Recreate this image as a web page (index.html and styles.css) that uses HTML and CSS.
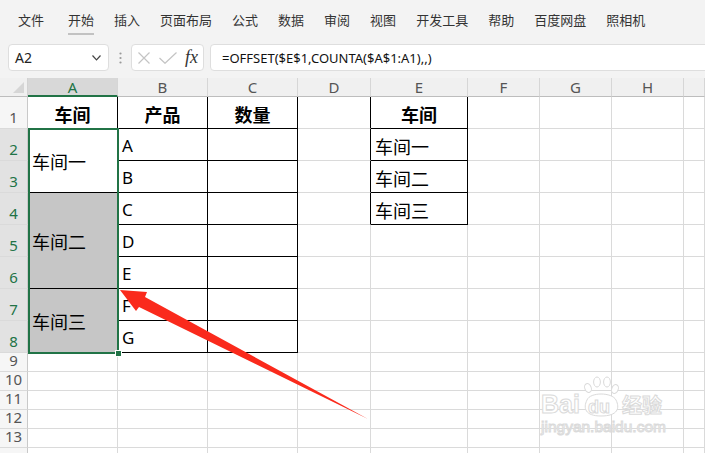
FILE: index.html
```html
<!DOCTYPE html>
<html lang="zh-CN">
<head>
    <meta charset="UTF-8">
    <title>车间 - 工作表</title>
    <link rel="stylesheet" href="styles.css">
</head>
<body>
<div class="app">
    <div class="menubar">
        <span class="menu-item first">文件</span>
        <span class="menu-item active">开始</span>
        <span class="menu-item">插入</span>
        <span class="menu-item">页面布局</span>
        <span class="menu-item">公式</span>
        <span class="menu-item">数据</span>
        <span class="menu-item">审阅</span>
        <span class="menu-item">视图</span>
        <span class="menu-item">开发工具</span>
        <span class="menu-item">帮助</span>
        <span class="menu-item">百度网盘</span>
        <span class="menu-item">照相机</span>
    </div>

    <div class="formulabar">
        <div class="namebox">
            <span>A2</span>
            <svg width="9" height="6" viewBox="0 0 9 6"><polyline points="0.5,0.5 4.5,4.8 8.5,0.5" fill="none" stroke="#444" stroke-width="1.2"/></svg>
        </div>
        <div class="grip">
            <svg width="3" height="12" viewBox="0 0 3 12"><circle cx="1.5" cy="1.5" r="1.1" fill="#999"/><circle cx="1.5" cy="6" r="1.1" fill="#999"/><circle cx="1.5" cy="10.5" r="1.1" fill="#999"/></svg>
        </div>
        <div class="fxbox">
            <svg width="12" height="12" viewBox="0 0 12 12"><path d="M0.5 0.5 L11.5 11.5 M11.5 0.5 L0.5 11.5" stroke="#c4c4c4" stroke-width="1.2"/></svg>
            <svg width="18" height="12" viewBox="0 0 18 12"><polyline points="0.5,6 6,11.3 17.5,0.5" fill="none" stroke="#c4c4c4" stroke-width="1.2"/></svg>
            <span class="fx">fx</span>
        </div>
        <div class="formula">=OFFSET($E$1,COUNTA($A$1:A1),,)</div>
    </div>

    <div class="sheet">
        <!-- column headers -->
        <div class="corner"><svg width="11" height="11" viewBox="0 0 11 11"><polygon points="11,0 11,11 0,11" fill="#d6d6d6"/></svg></div>
        <div class="ch sel">A</div>
        <div class="ch">B</div>
        <div class="ch">C</div>
        <div class="ch">D</div>
        <div class="ch">E</div>
        <div class="ch">F</div>
        <div class="ch">G</div>
        <div class="ch">H</div>
        <div class="ch"></div>

        <!-- merged cells in column A + selection -->
        <div class="c t merge m1">车间一</div>
        <div class="c t merge shade m2">车间二</div>
        <div class="c t merge shade m3">车间三</div>
        <div class="selection"><span class="handle"></span></div>

        <!-- row 1 -->
        <div class="rh">1</div>
        <div class="c t hd">车间</div>
        <div class="c t hd">产品</div>
        <div class="c t hd">数量</div>
        <div class="c edge"></div>
        <div class="c t hd">车间</div>
        <div class="c"></div><div class="c"></div><div class="c"></div><div class="c"></div>

        <!-- row 2 -->
        <div class="rh sel">2</div>
        <div class="c t">A</div>
        <div class="c t"></div>
        <div class="c edge"></div>
        <div class="c t cjk">车间一</div>
        <div class="c"></div><div class="c"></div><div class="c"></div><div class="c"></div>

        <!-- row 3 -->
        <div class="rh sel">3</div>
        <div class="c t">B</div>
        <div class="c t"></div>
        <div class="c edge"></div>
        <div class="c t cjk">车间二</div>
        <div class="c"></div><div class="c"></div><div class="c"></div><div class="c"></div>

        <!-- row 4 -->
        <div class="rh sel">4</div>
        <div class="c t">C</div>
        <div class="c t"></div>
        <div class="c edge"></div>
        <div class="c t cjk">车间三</div>
        <div class="c"></div><div class="c"></div><div class="c"></div><div class="c"></div>

        <!-- row 5 -->
        <div class="rh sel">5</div>
        <div class="c t">D</div>
        <div class="c t"></div>
        <div class="c"></div><div class="c"></div><div class="c"></div><div class="c"></div><div class="c"></div><div class="c"></div>

        <!-- row 6 -->
        <div class="rh sel">6</div>
        <div class="c t">E</div>
        <div class="c t"></div>
        <div class="c"></div><div class="c"></div><div class="c"></div><div class="c"></div><div class="c"></div><div class="c"></div>

        <!-- row 7 -->
        <div class="rh sel">7</div>
        <div class="c t">F</div>
        <div class="c t"></div>
        <div class="c"></div><div class="c"></div><div class="c"></div><div class="c"></div><div class="c"></div><div class="c"></div>

        <!-- row 8 -->
        <div class="rh sel">8</div>
        <div class="c t">G</div>
        <div class="c t"></div>
        <div class="c"></div><div class="c"></div><div class="c"></div><div class="c"></div><div class="c"></div><div class="c"></div>

        <!-- rows 9 - 14 -->
        <div class="rh">9</div>
        <div class="c"></div><div class="c"></div><div class="c"></div><div class="c"></div><div class="c"></div><div class="c"></div><div class="c"></div><div class="c"></div><div class="c"></div>
        <div class="rh">10</div>
        <div class="c"></div><div class="c"></div><div class="c"></div><div class="c"></div><div class="c"></div><div class="c"></div><div class="c"></div><div class="c"></div><div class="c"></div>
        <div class="rh">11</div>
        <div class="c"></div><div class="c"></div><div class="c"></div><div class="c"></div><div class="c"></div><div class="c"></div><div class="c"></div><div class="c"></div><div class="c"></div>
        <div class="rh">12</div>
        <div class="c"></div><div class="c"></div><div class="c"></div><div class="c"></div><div class="c"></div><div class="c"></div><div class="c"></div><div class="c"></div><div class="c"></div>
        <div class="rh">13</div>
        <div class="c"></div><div class="c"></div><div class="c"></div><div class="c"></div><div class="c"></div><div class="c"></div><div class="c"></div><div class="c"></div><div class="c"></div>
        <div class="rh"></div>
        <div class="c"></div><div class="c"></div><div class="c"></div><div class="c"></div><div class="c"></div><div class="c"></div><div class="c"></div><div class="c"></div><div class="c"></div>
    </div>

    <!-- red annotation arrow -->
    <svg class="arrow" width="705" height="453" viewBox="0 0 705 453">
        <polygon points="120,290 147,292 145,297 368,419 139,307 136,311" fill="#fa2a1c"/>
    </svg>

    <!-- watermark -->
    <svg class="watermark" width="135" height="66" viewBox="0 0 135 66">
        <g fill="#fff" stroke="#dadada" stroke-width="1">
            <text x="3" y="41" class="wm-big">Bai</text>
            <ellipse cx="50" cy="16" rx="3.2" ry="4.6" transform="rotate(-20 50 16)"/>
            <ellipse cx="59" cy="10" rx="3.4" ry="5"/>
            <ellipse cx="69" cy="10" rx="3.4" ry="5"/>
            <ellipse cx="77" cy="17" rx="3.2" ry="4.6" transform="rotate(20 77 17)"/>
            <path d="M49 28 C52 20, 74 20, 78 28 C82 36, 80 44, 63 44 C47 44, 45 36, 49 28 Z"/>
            <text x="50" y="41" class="wm-du">du</text>
            <text x="84" y="41" class="wm-cjk">经验</text>
            <text x="3" y="60" class="wm-url">jingyan.baidu.com</text>
        </g>
    </svg>
</div>
</body>
</html>
```

FILE: styles.css
```css
body {
    margin: 0;
    font-family: "Noto Sans", "Noto Sans CJK SC", sans-serif;
    background-color: #fff;
    overflow: hidden;
}

.app {
    position: relative;
    width: 705px;
    height: 453px;
    overflow: hidden;
}

/* top menu */
.menubar {
    display: flex;
    align-items: center;
    height: 40px;
    padding-left: 8px;
    background-color: #f3f3f3;
    font-family: "Noto Sans CJK SC", sans-serif;
    font-size: 13px;
    color: #333;
}
.menu-item {
    position: relative;
    padding: 0 10px;
    line-height: 18px;
}
.menu-item.first {
    margin-right: 4px;
}
.menu-item.active::after {
    content: "";
    position: absolute;
    left: 10px;
    right: 10px;
    bottom: -6px;
    height: 2px;
    background: #c2c2c2;
}

/* formula bar */
.formulabar {
    display: flex;
    align-items: center;
    height: 27px;
    padding: 4px 0 7px 8px;
    background-color: #f3f3f3;
}
.namebox {
    display: flex;
    align-items: center;
    justify-content: space-between;
    box-sizing: border-box;
    width: 101px;
    height: 27px;
    padding: 0 7px 0 6px;
    background: #fff;
    border: 1px solid #dedede;
    border-radius: 4px;
    font-size: 14px;
    color: #222;
}
.grip {
    display: flex;
    justify-content: center;
    width: 22px;
}
.fxbox {
    display: flex;
    align-items: center;
    box-sizing: border-box;
    width: 73px;
    height: 27px;
    padding-left: 6px;
    gap: 9px;
    background: #fff;
    border: 1px solid #dedede;
    border-radius: 4px;
}
.fx {
    font-family: "Liberation Serif", serif;
    font-style: italic;
    font-size: 18px;
    color: #333;
    margin-left: -1px;
}
.formula {
    flex: 1;
    display: flex;
    align-items: center;
    box-sizing: border-box;
    height: 27px;
    margin-left: 6px;
    margin-right: -10px;
    padding-left: 11px;
    background: #fff;
    border: 1px solid #dedede;
    border-radius: 4px;
    font-size: 13px;
    color: #111;
}

/* sheet grid */
.sheet {
    display: grid;
    grid-template-columns: 28px 90px 90px 90px 73px 97px 72px 72px 72px 1fr;
    grid-template-rows: 19px repeat(8, 32px) repeat(6, 19px);
}
.corner {
    display: flex;
    align-items: flex-end;
    justify-content: flex-end;
    padding: 0 3px 3px 0;
    background: #f0f0f0;
    border-right: 1px solid #d2d2d2;
    border-bottom: 1px solid #bdbdbd;
}
.ch {
    background: #f0f0f0;
    border-right: 1px solid #d6d6d6;
    border-bottom: 1px solid #bdbdbd;
    text-align: center;
    font-size: 15px;
    line-height: 19px;
    color: #555;
}
.ch.sel {
    background: #d8d8d8;
    color: #217346;
    border-bottom: 2px solid #217346;
}
.rh {
    display: flex;
    align-items: flex-end;
    justify-content: center;
    padding-bottom: 2px;
    background: #f6f6f6;
    border-right: 1px solid #c9c9c9;
    border-bottom: 1px solid #dadada;
    font-size: 15px;
    line-height: 17px;
    color: #555;
}
.rh.sel {
    background: #e2e2e2;
    color: #217346;
}

.c {
    display: flex;
    align-items: flex-end;
    padding: 0 4px 3px;
    min-width: 0;
    border-right: 1px solid #dadada;
    border-bottom: 1px solid #dadada;
    font-size: 17px;
    line-height: 22px;
    color: #000;
}
.c.t {
    border-color: #000;
}
.c.edge {
    border-right-color: #000;
}
.c.hd {
    justify-content: center;
    font-family: "Noto Sans CJK SC", sans-serif;
    font-weight: bold;
    font-size: 18px;
}
.c.cjk,
.c.merge {
    font-family: "Noto Sans CJK SC", sans-serif;
    font-size: 18px;
}
.c.merge {
    align-items: center;
    padding-bottom: 0;
}
.c.shade {
    background: #c6c6c6;
}
.m1 {
    grid-area: 3 / 2 / 5 / 3;
    border-bottom-color: transparent;
}
.m2 {
    grid-area: 5 / 2 / 8 / 3;
}
.m3 {
    grid-area: 8 / 2 / 10 / 3;
}

.selection {
    grid-area: 3 / 2 / 10 / 3;
    position: relative;
    z-index: 2;
    margin: -1px -1px -1px 0;
    border: 2px solid #217346;
    pointer-events: none;
}
.handle {
    position: absolute;
    right: -5px;
    bottom: -5px;
    width: 5px;
    height: 5px;
    background: #217346;
    border: 1px solid #fff;
}

/* overlays */
.arrow {
    position: absolute;
    left: 0;
    top: 0;
    z-index: 3;
    pointer-events: none;
}
.watermark {
    position: absolute;
    left: 538px;
    top: 372px;
    z-index: 3;
}
.wm-big {
    font-family: "Liberation Sans", sans-serif;
    font-weight: bold;
    font-size: 25px;
}
.wm-du {
    font-family: "Liberation Sans", sans-serif;
    font-weight: bold;
    font-size: 18px;
}
.wm-cjk {
    font-family: "Noto Sans CJK SC", sans-serif;
    font-weight: bold;
    font-size: 20px;
}
.wm-url {
    font-family: "Liberation Sans", sans-serif;
    font-size: 15.5px;
}
```
